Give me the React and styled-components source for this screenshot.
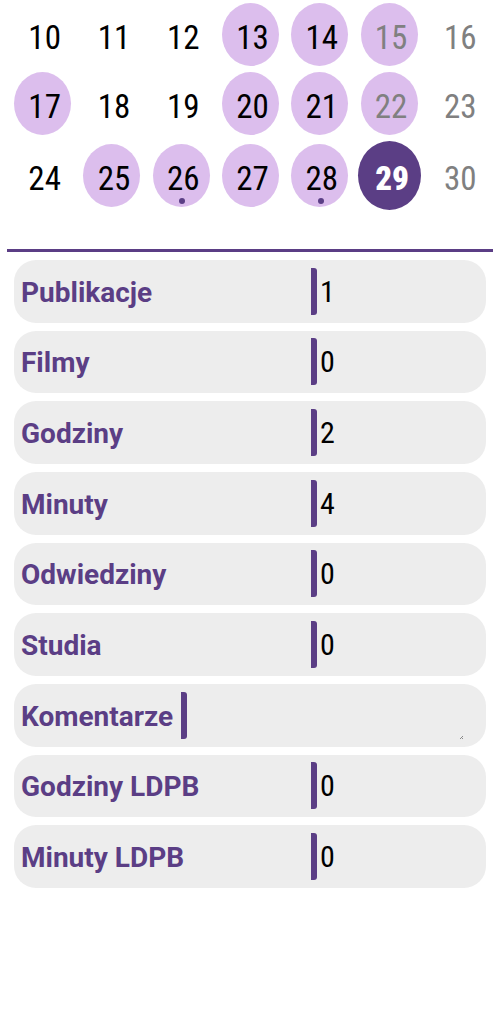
import React, { useState } from "react";
import styled, { createGlobalStyle } from "styled-components";

const GlobalStyle = createGlobalStyle`
  *, *::before, *::after { box-sizing: border-box; }
  body {
    margin: 0;
    background: #ffffff;
    color: #000000;
    font-family: "Roboto Condensed", Roboto, sans-serif;
  }
  button, input, textarea { font-family: inherit; }
`;

const purple = "#5b3e85";
const lilac = "#dcbeed";

const Page = styled.main`
  padding: 0 7px;
`;

const Calendar = styled.section`
  display: grid;
  grid-template-columns: repeat(7, 1fr);
  grid-template-rows: 69px 69px 75px;
  place-items: center;
  padding-left: 1px;
`;

const Day = styled.button`
  position: relative;
  display: flex;
  align-items: center;
  justify-content: center;
  width: ${(p) => (p.$selected ? 63 : 57)}px;
  height: ${(p) => (p.$selected ? 69 : 63)}px;
  padding: 6px 0 0 ${(p) => (p.$selected ? 6 : 4)}px;
  border: 0;
  border-radius: 50%;
  background: ${(p) => (p.$selected ? purple : p.$marked ? lilac : "transparent")};
  color: ${(p) => (p.$selected ? "#ffffff" : p.$weekend ? "#808080" : "#000000")};
  font-size: 33px;
  line-height: 36px;
  font-weight: ${(p) => (p.$selected ? 900 : 400)};
`;

const Dot = styled.span`
  position: absolute;
  bottom: 3px;
  left: 50%;
  width: 6px;
  height: 6px;
  margin-left: -2px;
  border-radius: 50%;
  background: ${purple};
`;

const Divider = styled.hr`
  height: 3px;
  margin: 36px 0 8px;
  border: 0;
  background: ${purple};
`;

const Report = styled.form`
  display: grid;
  grid-template-columns: minmax(0, 1fr);
  grid-auto-rows: 1fr;
  gap: 8px;
  min-height: 628px;
  padding: 0 7px;
`;

const Row = styled.div`
  display: flex;
  align-items: center;
  justify-content: space-between;
  gap: 8px;
  padding: 0 20px 0 7px;
  border-radius: 22px;
  background: #ededed;
`;

const Label = styled.label`
  padding-top: 3px;
  color: ${purple};
  font-family: Roboto, sans-serif;
  font-size: 28px;
  line-height: 36px;
  font-weight: 700;
  white-space: nowrap;
`;

const Field = styled.div`
  position: relative;
  display: flex;
  align-items: center;
  min-width: 0;
  flex: ${(p) => (p.$wide ? "1 1 0" : "0 0 155px")};
`;

const Bar = styled.span`
  flex: none;
  width: 6px;
  height: 47px;
  border-radius: 0 3px 3px 0;
  background: ${purple};
`;

const NumberInput = styled.input`
  flex: 1;
  min-width: 0;
  height: 47px;
  padding: 0 0 0 3px;
  border: 0;
  background: transparent;
  color: #000000;
  font-size: 30px;
  line-height: 36px;
`;

const Comment = styled.textarea`
  flex: 1;
  min-width: 0;
  height: 47px;
  padding: 6px 3px;
  border: 0;
  background: transparent;
  font-size: 30px;
  line-height: 36px;
  resize: none;
`;

const Grip = styled.svg`
  position: absolute;
  right: 3px;
  bottom: 0;
  width: 3px;
  height: 3px;
`;

const marked = [13, 14, 15, 17, 20, 21, 22, 25, 26, 27, 28];
const dotted = [26, 28];
const days = Array.from({ length: 21 }, (_, i) => i + 10);

const fields = [
  { id: "publikacje", label: "Publikacje", value: "1" },
  { id: "filmy", label: "Filmy", value: "0" },
  { id: "godziny", label: "Godziny", value: "2" },
  { id: "minuty", label: "Minuty", value: "4" },
  { id: "odwiedziny", label: "Odwiedziny", value: "0" },
  { id: "studia", label: "Studia", value: "0" },
  { id: "komentarze", label: "Komentarze", comment: true },
  { id: "godziny-ldpb", label: "Godziny LDPB", value: "0" },
  { id: "minuty-ldpb", label: "Minuty LDPB", value: "0" },
];

export default function App() {
  const [selected, setSelected] = useState(29);
  return (
    <>
      <GlobalStyle />
      <Page>
        <Calendar>
          {days.map((day, i) => (
            <Day
              key={day}
              type="button"
              $marked={marked.includes(day)}
              $weekend={i % 7 > 4}
              $selected={day === selected}
              aria-pressed={day === selected}
              onClick={() => setSelected(day)}
            >
              {day}
              {dotted.includes(day) && <Dot />}
            </Day>
          ))}
        </Calendar>
        <Divider />
        <Report>
          {fields.map((f) => (
            <Row key={f.id}>
              <Label htmlFor={f.id}>{f.label}</Label>
              <Field $wide={f.comment}>
                <Bar />
                {f.comment ? (
                  <>
                    <Comment id={f.id} rows={1} />
                    <Grip viewBox="0 0 3 3" aria-hidden="true">
                      <path d="M0 3L3 0M2 3L3 2" stroke="#707070" strokeWidth="0.8" />
                    </Grip>
                  </>
                ) : (
                  <NumberInput id={f.id} inputMode="numeric" defaultValue={f.value} />
                )}
              </Field>
            </Row>
          ))}
        </Report>
      </Page>
    </>
  );
}
